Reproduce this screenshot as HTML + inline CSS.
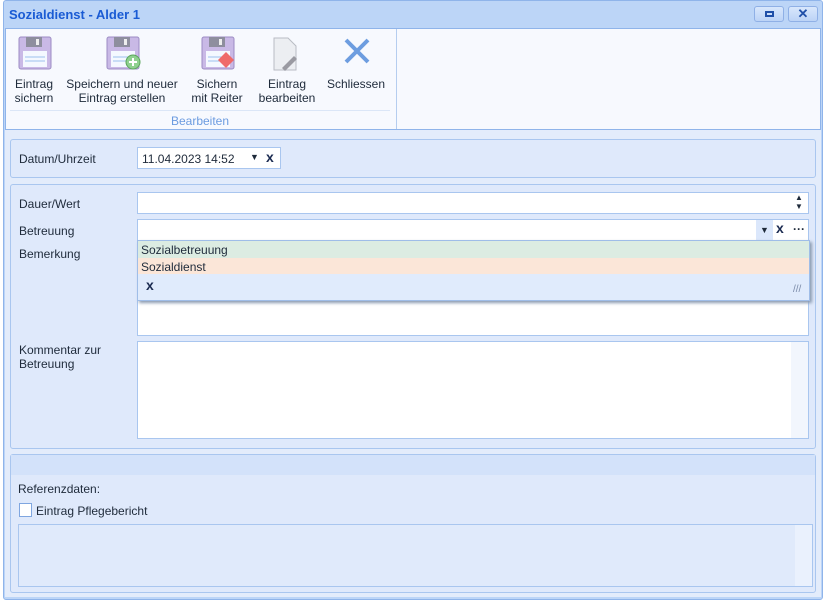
<!DOCTYPE html>
<html><head><meta charset="utf-8"><style>
*{box-sizing:border-box;margin:0;padding:0}
body{width:825px;height:605px;background:#fff;font-family:"Liberation Sans",sans-serif;font-size:12px;color:#1e2a3a;position:relative;overflow:hidden}
.a{position:absolute}
.win{left:3px;top:0;width:820px;height:600px;background:#bcd5f7;border:1px solid #8fb4ea;border-radius:3px}
.title{left:9px;top:7px;font-weight:bold;color:#1a5bd4;font-size:13px}
.btn{top:6px;width:30px;height:16px;border:1px solid #8fb0e6;border-radius:3px;background:linear-gradient(#d8e7fc,#bcd3f6)}
.rib{left:5px;top:28px;width:816px;height:102px;background:#f7f9fe;border:1px solid #8fb4ea}
.lbl{font-size:12px;text-align:center;line-height:14px;color:#1e2a3a}
.body{left:5px;top:130px;width:816px;height:467px;background:#e3ecfb}
.pan{border:1px solid #a9c6ef;border-radius:3px;background:#dfe9fb}
.inp{background:#fff;border:1px solid #a9c6ef}
</style></head><body>
<div class="a win"></div>
<div class="a title">Sozialdienst - Alder 1</div>
<div class="a btn" style="left:754px"><div class="a" style="left:10px;top:4px;width:9px;height:6px;border:2px solid #1f4fa8"></div></div>
<div class="a btn" style="left:788px;text-align:center;color:#1f4fa8;font-weight:bold;font-size:13px;line-height:14px">✕</div>
<div class="a rib"></div>
<div class="a" style="left:396px;top:29px;width:1px;height:100px;background:#b5cdef"></div>
<div class="a" style="left:10px;top:110px;width:380px;height:1px;background:#dbe6f7"></div>
<!-- icons -->
<svg class="a" style="left:0;top:30px" width="400" height="45">
<g id="f"><rect x="19" y="7" width="32" height="32" rx="2" fill="#c9b9e6" stroke="#9c8cc4"/><rect x="26" y="7" width="16" height="10" fill="#8e8e9e"/><rect x="36" y="9" width="3" height="6" fill="#eee"/><rect x="23" y="21" width="24" height="16" fill="#f4f8ff"/><line x1="25" y1="27" x2="45" y2="27" stroke="#9cc0ec"/><line x1="25" y1="31" x2="45" y2="31" stroke="#9cc0ec"/></g>
<use href="#f" x="88"/><circle cx="133" cy="32" r="7" fill="#8fd08f" stroke="#5ba65b"/><path d="M133 28v8M129 32h8" stroke="#fff" stroke-width="2"/>
<use href="#f" x="183"/><path d="M226 22l8 8-8 8-8-8z" fill="#ef6a6a"/>
<path d="M274 8h14l8 8v24h-22z" fill="#eceef2" stroke="#b9bcc4"/><path d="M282 38l12-12 3 3-12 12z" fill="#9a9aa2"/>
<path d="M346 10l22 22M368 10l-22 22" stroke="#6d9de0" stroke-width="4"/>
</svg>
<div class="a lbl" style="left:12px;top:77px;width:44px">Eintrag<br>sichern</div>
<div class="a lbl" style="left:62px;top:77px;width:120px">Speichern und neuer<br>Eintrag erstellen</div>
<div class="a lbl" style="left:188px;top:77px;width:58px">Sichern<br>mit Reiter</div>
<div class="a lbl" style="left:254px;top:77px;width:66px">Eintrag<br>bearbeiten</div>
<div class="a lbl" style="left:326px;top:77px;width:60px">Schliessen</div>
<div class="a lbl" style="left:150px;top:114px;width:100px;color:#6b9be0">Bearbeiten</div>
<div class="a body"></div>
<div class="a pan" style="left:10px;top:139px;width:806px;height:39px"></div>
<div class="a" style="left:19px;top:152px">Datum/Uhrzeit</div>
<div class="a inp" style="left:137px;top:147px;width:144px;height:22px"></div>
<div class="a" style="left:142px;top:152px">11.04.2023 14:52</div>
<div class="a" style="left:250px;top:152px;font-size:9px">▼</div>
<div class="a" style="left:266px;top:149px;font-weight:bold;font-size:14px;color:#1a2a50">x</div>
<div class="a pan" style="left:10px;top:184px;width:806px;height:265px"></div>
<div class="a" style="left:19px;top:197px">Dauer/Wert</div>
<div class="a inp" style="left:137px;top:192px;width:672px;height:22px"></div>
<div class="a" style="left:795px;top:193px;font-size:8px;line-height:9px">▲<br>▼</div>
<div class="a" style="left:19px;top:224px">Betreuung</div>
<div class="a inp" style="left:137px;top:219px;width:672px;height:22px"></div>
<div class="a" style="left:756px;top:220px;width:17px;height:20px;background:#dbe7fb;font-size:9px;text-align:center;line-height:20px">▼</div>
<div class="a" style="left:776px;top:220px;font-weight:bold;font-size:14px;color:#1a2a50">x</div>
<div class="a" style="left:793px;top:222px;font-weight:bold">···</div>
<div class="a" style="left:19px;top:247px">Bemerkung</div>
<div class="a inp" style="left:137px;top:245px;width:672px;height:91px"></div>
<div class="a" style="left:137px;top:240px;width:673px;height:61px;background:#e0ebfc;border:1px solid #9fbde8;box-shadow:2px 2px 3px #8a9ab0"></div>
<div class="a" style="left:138px;top:241px;width:671px;height:17px;background:#dcece2"></div>
<div class="a" style="left:138px;top:258px;width:671px;height:16px;background:#fbe6d8"></div>
<div class="a" style="left:141px;top:243px">Sozialbetreuung</div>
<div class="a" style="left:141px;top:260px">Sozialdienst</div>
<div class="a" style="left:146px;top:277px;font-weight:bold;font-size:14px;color:#1a2a50">x</div>
<div class="a" style="left:793px;top:284px;color:#7a8aa8;font-size:10px">///</div>
<div class="a" style="left:19px;top:343px;line-height:14px">Kommentar zur<br>Betreuung</div>
<div class="a inp" style="left:137px;top:341px;width:672px;height:98px"></div>
<div class="a" style="left:791px;top:342px;width:17px;height:96px;background:#f2f6fd"></div>
<div class="a pan" style="left:10px;top:454px;width:806px;height:139px"></div>
<div class="a" style="left:11px;top:455px;width:804px;height:20px;background:#d3e2fa"></div>
<div class="a" style="left:18px;top:482px">Referenzdaten:</div>
<div class="a" style="left:19px;top:503px;width:13px;height:14px;background:#fff;border:1px solid #7fa6e0"></div>
<div class="a" style="left:36px;top:504px">Eintrag Pflegebericht</div>
<div class="a" style="left:18px;top:524px;width:795px;height:63px;border:1px solid #a9c6ef;background:#e0eafb"></div>
<div class="a" style="left:795px;top:525px;width:17px;height:61px;background:#eaf1fd"></div>
</body></html>
